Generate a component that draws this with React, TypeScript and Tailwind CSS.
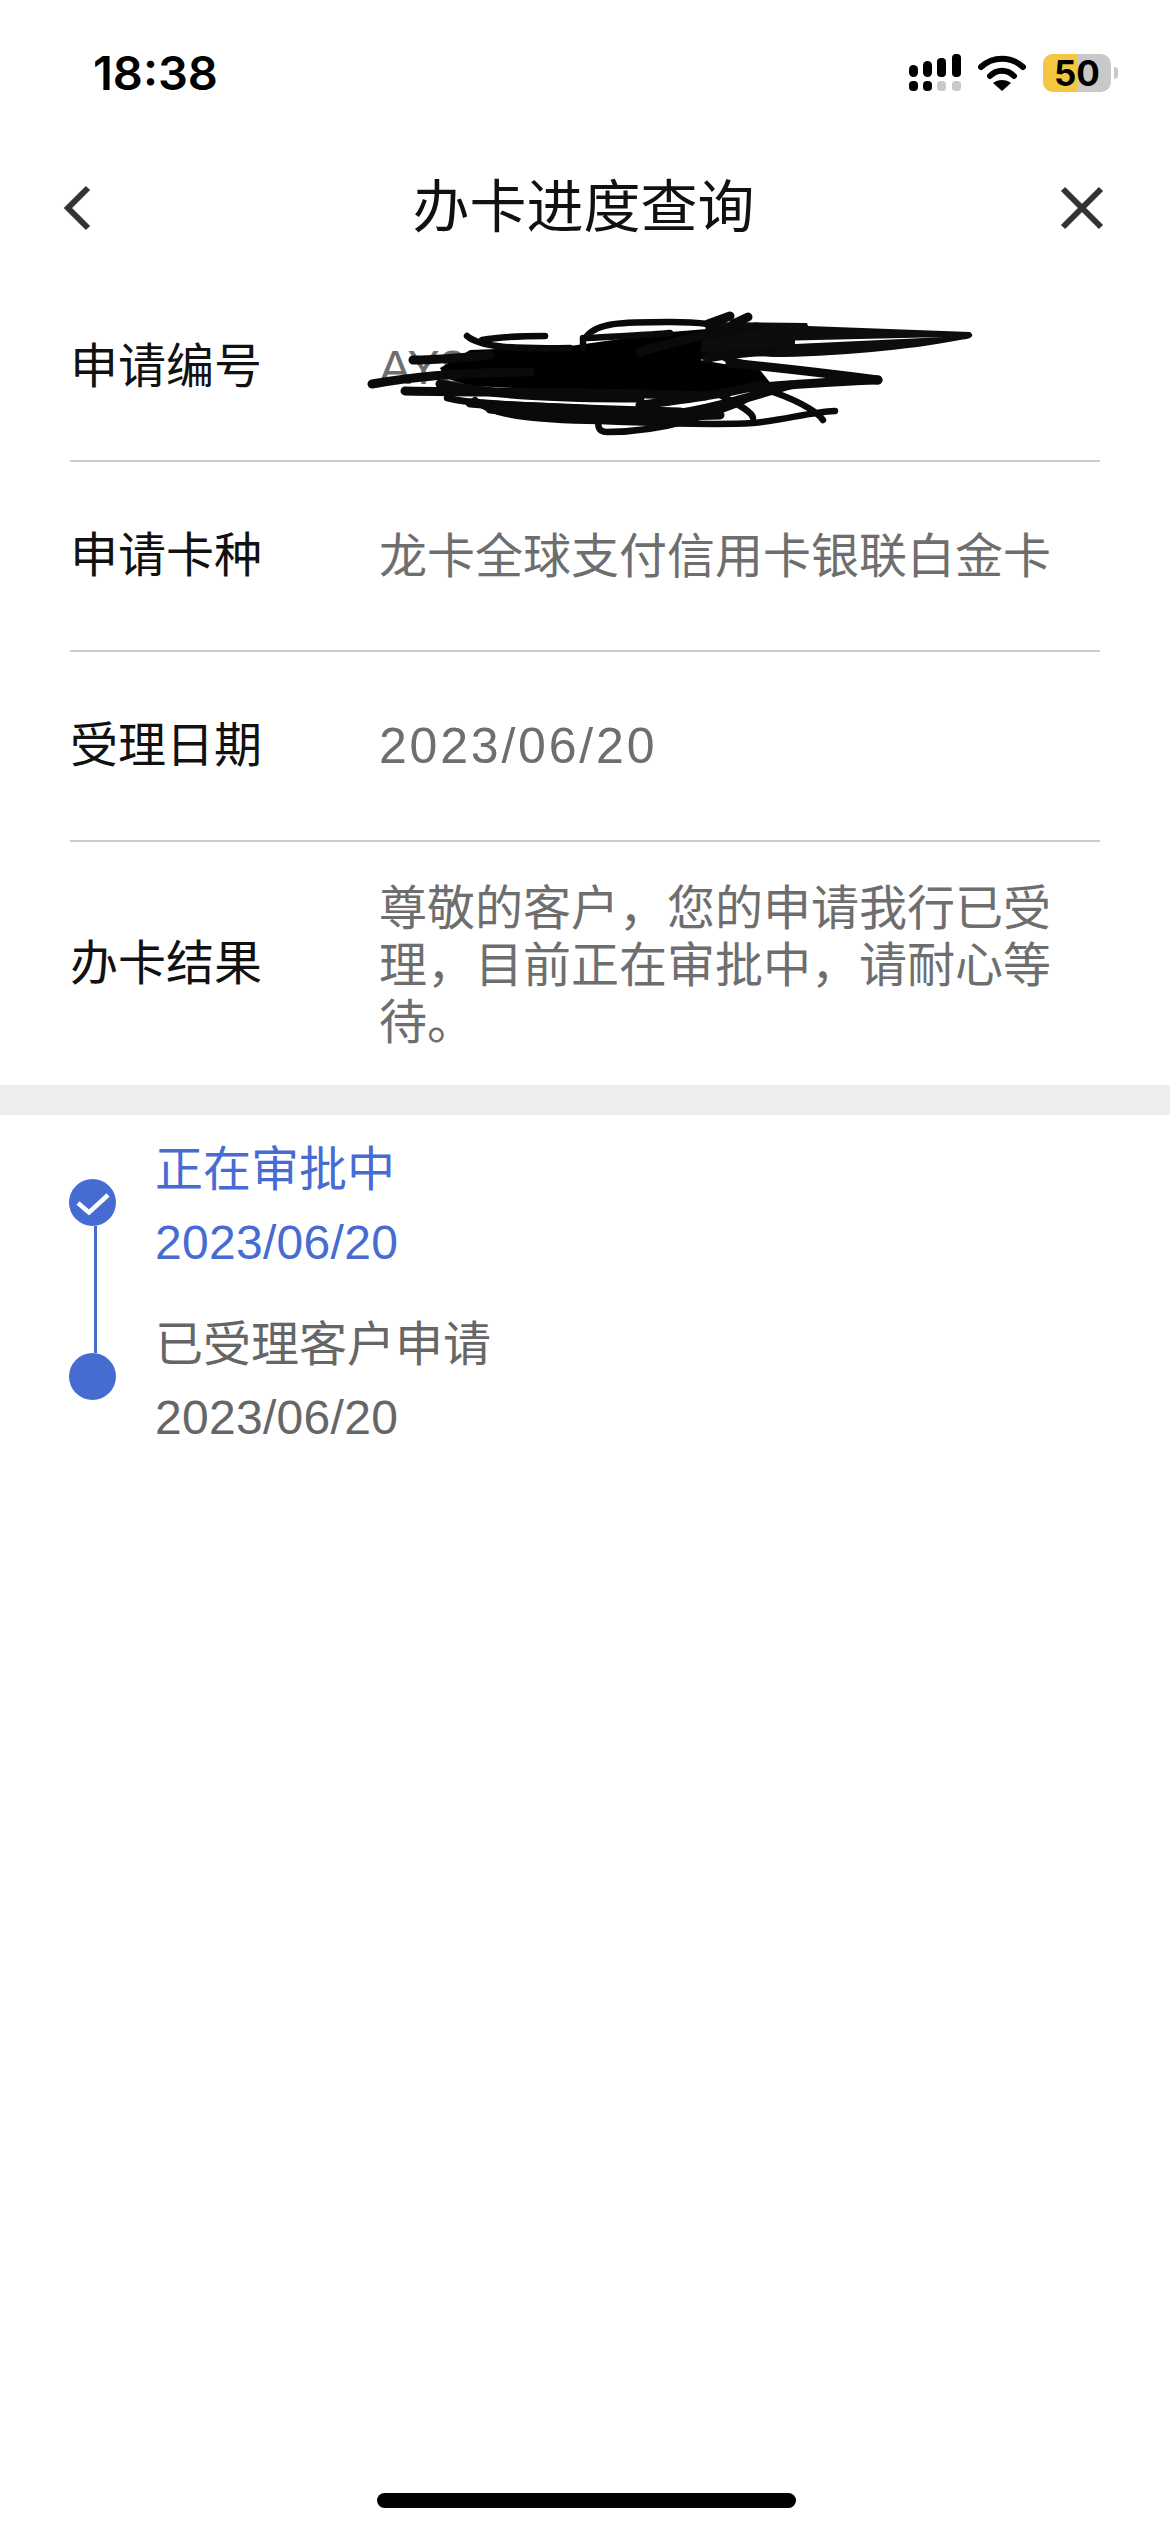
const rows = [
  { label: '申请卡种', value: '龙卡全球支付信用卡银联白金卡', valueClass: 'text-[48px]' },
  { label: '受理日期', value: '2023/06/20', valueClass: 'text-[50px] tracking-[2.8px]' },
];

// pen marks over the application number, in page coordinates
const thinStrokes = [
  'M482 340 C500 337 525 336 545 336',
  'M467 336 C480 347 510 349 570 348',
  'M587 338 C620 336 650 335 670 333',
  'M587 336 C597 323 620 322 670 322 C690 322 700 323 708 324',
  'M583 338 L583 348',
  'M447 398 C470 404 520 405 570 407 C620 410 640 412 647 415',
  'M475 400 C490 415 530 420 600 421 C650 423 720 425 753 423 C785 420 810 412 835 411',
  'M600 412 C597 425 597 432 607 432 C640 432 665 427 690 420 C710 414 740 405 757 393',
  'M720 395 C740 405 752 412 753 418',
  'M773 392 C805 403 820 415 823 420',
  'M725 358 C733 362 755 365 756 368',
];

const thickStrokes = [
  'M708 324 L730 316',
  'M733 324 L748 317',
  'M640 352 C680 340 720 330 757 327',
  'M707 358 C730 354 750 352 773 351',
  'M372 384 C420 375 470 372 530 372',
  'M413 360 C440 360 460 358 490 355',
  'M405 391 C500 393 600 391 705 396',
  'M470 403 C520 407 600 410 680 412',
  'M490 409 C560 416 640 418 720 415',
  'M640 405 C680 400 720 395 760 385',
  'M660 416 C700 412 740 400 790 385',
  'M730 363 C780 368 840 375 878 380',
  'M750 388 C800 384 840 381 878 380',
  'M440 384 C500 396 560 398 640 398',
];

function StatusIcons() {
  return (
    <div className="flex items-center">
      <svg width="54" height="38" viewBox="0 0 54 38" className="mr-[17px]">
        <rect x="2" y="11" width="9" height="12" rx="4.5" fill="#000" />
        <rect x="16" y="7" width="9" height="16" rx="4.5" fill="#000" />
        <rect x="30" y="4" width="9" height="19" rx="4" fill="#000" />
        <rect x="45" y="0" width="9" height="23" rx="4" fill="#000" />
        <rect x="2" y="27" width="9" height="10" rx="4" fill="#000" />
        <rect x="16" y="27" width="9" height="10" rx="4" fill="#000" />
        <rect x="30" y="27" width="9" height="10" rx="3.5" fill="#c9c9c9" />
        <rect x="45" y="27" width="9" height="10" rx="3.5" fill="#c9c9c9" />
      </svg>
      <svg width="48" height="38" viewBox="0 0 48 38" className="mr-[17px]">
        <path d="M3 13 C15 2 33 2 45 13" fill="none" stroke="#000" strokeWidth="6" strokeLinecap="round" />
        <path d="M12 22 C19 15 29 15 36 22" fill="none" stroke="#000" strokeWidth="6" strokeLinecap="round" />
        <path d="M15 29 L24 37 L33 29 C28 25 20 25 15 29 Z" fill="#000" />
      </svg>
      <div className="relative h-[38px] w-[68px] rounded-[10px] bg-[#c9c9c9]">
        <div className="h-full w-[34px] rounded-l-[10px] bg-[#f3c840]" />
        <span className="absolute inset-0 flex items-center justify-center text-[35px] font-bold text-black font-['Inter',sans-serif]">
          50
        </span>
      </div>
      <div className="ml-[3px] h-[12px] w-[4px] rounded-r-full bg-[#c9c9c9]" />
    </div>
  );
}

function InfoRow({
  label,
  value,
  height,
  valueClass = 'text-[48px]',
}: {
  label: string;
  value: string;
  height: string;
  valueClass?: string;
}) {
  return (
    <div className={`flex items-center border-b-2 border-[#cbcbcb] ${height}`}>
      <div className="w-[309px] shrink-0 text-[48px] leading-none text-[#111]">{label}</div>
      <div className={`leading-[57px] text-[#6e6e6e] ${valueClass}`}>{value}</div>
    </div>
  );
}

export default function App() {
  return (
    <div className="flex h-[2532px] flex-col overflow-hidden bg-white font-['Liberation_Sans','Noto_Sans_CJK_SC',sans-serif]">
      <div className="flex h-[146px] shrink-0 items-center justify-between pr-[52px] pl-[93px]">
        <span className="text-[47px] font-semibold text-black font-['Inter',sans-serif]">18:38</span>
        <StatusIcons />
      </div>

      <div className="grid h-[118px] shrink-0 grid-cols-[1fr_auto_1fr] items-center pt-[4px] pr-[65px] pl-[62px]">
        <svg width="30" height="48" viewBox="0 0 30 48" className="mt-[1px]">
          <path d="M26 4 L6 24 L26 44" fill="none" stroke="#333" strokeWidth="6" />
        </svg>
        <h1 className="text-[57px] leading-none font-normal text-[#111]">办卡进度查询</h1>
        <svg width="46" height="48" viewBox="0 0 46 48" className="mt-[1px] justify-self-end">
          <path d="M4 5 L42 43 M42 5 L4 43" fill="none" stroke="#333" strokeWidth="6" />
        </svg>
      </div>

      <div className="mx-[70px] flex flex-col">
        <div className="relative">
          <InfoRow label="申请编号" value="AY8" height="h-[198px] pt-[10px]" />
          <svg
            viewBox="340 290 660 170"
            className="absolute top-[26px] left-[270px] h-[170px] w-[660px]"
          >
            <path
              d="M440 368 L470 350 L570 346 L670 332 L757 325 L745 348 L700 360 L760 370 L772 385 L700 397 L640 392 L560 390 L470 386 L445 378 Z"
              fill="#000"
            />
            <path
              d="M707 322 L807 323 L808 326 L970 332 C975 336 972 339 960 340 C910 350 830 357 773 357 L700 352 Z"
              fill="#0d0d0d"
            />
            <path d="M795 340.5 L945 337 L795 344 Z" fill="#fff" />
            {thinStrokes.map((d) => (
              <path key={d} d={d} fill="none" stroke="#0a0a0a" strokeWidth="6.5" strokeLinecap="round" />
            ))}
            {thickStrokes.map((d) => (
              <path key={d} d={d} fill="none" stroke="#0a0a0a" strokeWidth="9" strokeLinecap="round" />
            ))}
          </svg>
        </div>
        {rows.map((row) => (
          <InfoRow
            key={row.label}
            label={row.label}
            value={row.value}
            valueClass={row.valueClass}
            height="h-[190px]"
          />
        ))}
        <div className="flex h-[243px] items-center">
          <div className="w-[309px] shrink-0 text-[48px] leading-none text-[#111]">办卡结果</div>
          <div className="w-[680px] pt-[3px] text-[48px] leading-[57px] text-[#6e6e6e]">
            尊敬的客户，您的申请我行已受理，目前正在审批中，请耐心等待。
          </div>
        </div>
      </div>

      <div className="h-[30px] shrink-0 bg-[#eeeeee]" />

      <div className="flex pl-[69px]">
        <div className="mt-[64px] flex w-[86px] shrink-0 flex-col">
          <div className="flex h-[47px] w-[47px] items-center justify-center rounded-full bg-[#476cd1]">
            <svg width="34" height="24" viewBox="0 0 34 24">
              <path d="M2 12 L13 21.5 L32 4" fill="none" stroke="#fff" strokeWidth="4.5" />
            </svg>
          </div>
          <div className="ml-[25px] h-[127px] w-[3px] bg-[#476cd1]" />
          <div className="h-[47px] w-[47px] rounded-full bg-[#476cd1]" />
        </div>
        <div className="flex flex-col pt-[18px] text-[48px] leading-[73px]">
          <div className="text-[#476cd1]">
            <div>正在审批中</div>
            <div className="tracking-[0.3px]">2023/06/20</div>
          </div>
          <div className="mt-[29px] text-[#666666]">
            <div>已受理客户申请</div>
            <div className="tracking-[0.3px]">2023/06/20</div>
          </div>
        </div>
      </div>

      <div className="mt-auto mb-[24px] ml-[377px] h-[15px] w-[419px] shrink-0 rounded-full bg-black" />
    </div>
  );
}
